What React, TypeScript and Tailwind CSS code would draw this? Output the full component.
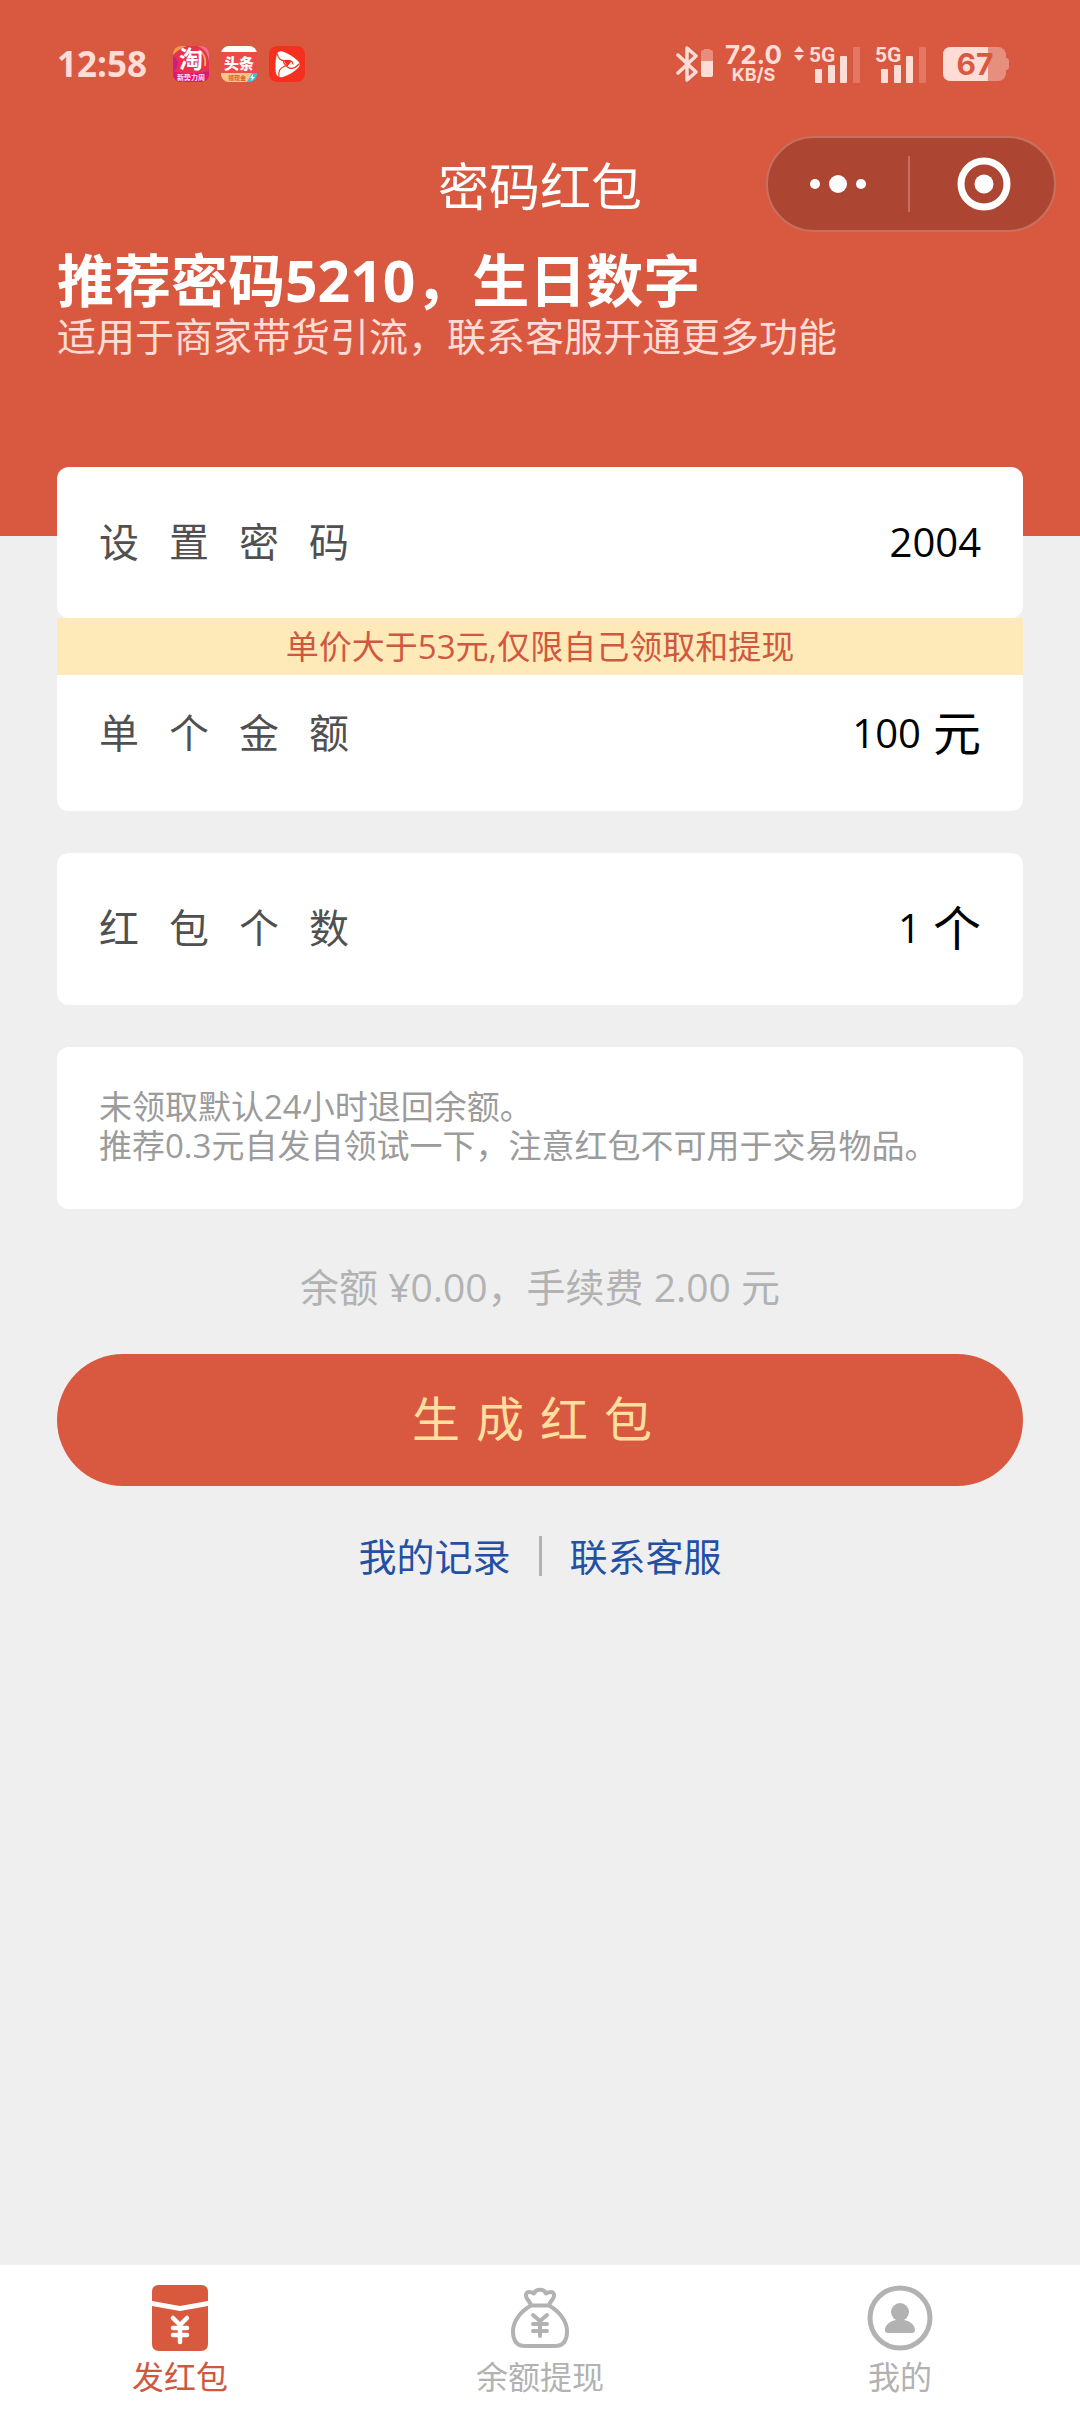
import React, { useState } from "react";

const FONT = "font-['Open_Sans','Noto_Sans_CJK_SC',sans-serif]";

function AppIconTao() {
  return (
    <svg className="size-9 overflow-visible" viewBox="0 0 36 36" role="img" aria-label="淘宝">
      <defs>
        <clipPath id="tao-clip">
          <rect width="36" height="36" rx="8" />
        </clipPath>
      </defs>
      <g clipPath="url(#tao-clip)">
        <rect width="36" height="36" fill="#e8304f" />
        <path d="M0 10 C8 14 4 24 0 26Z" fill="#c81e8c" />
        <path d="M24 0 C32 2 36 10 36 18 L36 0Z" fill="#f0708a" />
        <path d="M0 0 H14 C8 2 4 5 0 9Z" fill="#f09a4a" />
        <path d="M26 4 C32 8 33 14 32 20" stroke="#f5b04c" strokeWidth="2" fill="none" />
        <path d="M0 25 C6 28 28 28 36 25 V36 H0Z" fill="#e0147a" />
      </g>
      <text x="18" y="22" textAnchor="middle" fontSize="24" fontWeight="700" fill="#fff">淘</text>
      <text x="18" y="34" textAnchor="middle" fontSize="7" fontWeight="700" fill="#ffe3ef">新势力周</text>
    </svg>
  );
}

function AppIconNews() {
  return (
    <svg className="size-9 overflow-visible" viewBox="0 0 36 36" role="img" aria-label="头条">
      <defs>
        <clipPath id="news-clip">
          <rect width="36" height="36" rx="8" />
        </clipPath>
      </defs>
      <g clipPath="url(#news-clip)">
        <rect width="36" height="36" fill="#ee4a4a" />
        <rect width="36" height="6" fill="#fff" />
        <path d="M0 27 H31 L27 36 H0Z" fill="#fbc68a" />
        <path d="M31 27 H36 V36 H26Z" fill="#35c3d6" />
        <path d="M32 28 L29 32 H31 L30 35 L34 31 H32Z" fill="#fff" />
      </g>
      <text x="18" y="23" textAnchor="middle" fontSize="15" fontWeight="900" fill="#fff">头条</text>
      <text x="16" y="34" textAnchor="middle" fontSize="6" fontWeight="700" fill="#d4622f">领现金</text>
    </svg>
  );
}

function AppIconVideo() {
  return (
    <svg className="size-9" viewBox="0 0 36 36" role="img" aria-label="视频">
      <rect width="36" height="36" rx="8" fill="#f5301f" />
      <path
        d="M8 8 C9 5 12 4.500 15 6 C20 8 25 11 29 15 C31.500 17.500 31 20 29 22 C25 26 20 29 14 31 C10 32 7.500 30 7 27 C6 21 6.500 13 8 8Z"
        fill="#fff"
      />
      <g fill="none" stroke="#f5301f" strokeWidth="1.200" strokeLinecap="round">
        <path d="M8.500 8 C9 13 12 15 16 14.500 C20 14 23.500 14.500 24 18" />
        <path d="M30 18 C26 22.500 22 23.500 18.500 21 C15.500 18.500 14 17 14.500 14.500" />
        <path d="M10 30.500 C9 26 11 22 15 20.500 C19 19 21 17.500 21.500 15" />
      </g>
      <path d="M15 15 L22 15 L18.500 20.500Z" fill="#f5301f" />
    </svg>
  );
}

function Bluetooth() {
  return (
    <svg className="h-9 w-[37px]" viewBox="0 0 37 36" aria-label="蓝牙" role="img">
      <path
        d="M2 9 L20 26 L11 34 V2 L20 10 L2 27"
        fill="none"
        stroke="#ffdcd5"
        strokeWidth="3.500"
        strokeLinejoin="round"
        strokeLinecap="round"
      />
      <path d="M25 15 V6 Q25 4 27 4 H28 V3 H34 V4 H35 Q37 4 37 6 V15Z" fill="#e88d7b" />
      <path d="M25 15 H37 V29 Q37 31 35 31 H27 Q25 31 25 29Z" fill="#ffdcd5" />
    </svg>
  );
}

function Signal({ arrows = false }: { arrows?: boolean }) {
  return (
    <svg
      className={arrows ? "h-10 w-[67px]" : "h-10 w-[52px]"}
      viewBox={arrows ? "-15 0 67 40" : "0 0 52 40"}
      role="img"
      aria-label="5G 信号"
    >
      {arrows && <path d="M-15 8 L-10 2 L-5 8Z M-15 11 L-10 17 L-5 11Z" fill="#ffdcd5" />}
      <text x="0" y="18" fontSize="21" fontWeight="700" fill="#ffdcd5" fontFamily="Roboto">
        5G
      </text>
      <g fill="#ffdcd5">
        <rect x="6" y="25" width="7" height="14" rx="1" />
        <rect x="19" y="21" width="7" height="18" rx="1" />
        <rect x="31" y="12" width="7" height="27" rx="1" />
      </g>
      <rect x="44" y="3" width="7" height="36" rx="1" fill="#e37764" />
    </svg>
  );
}

function Battery() {
  return (
    <svg className="h-[34px] w-[66px]" viewBox="0 0 66 34" role="img" aria-label="电量 67%">
      <rect x="0" y="0" width="63" height="34" rx="8" fill="#e68f7f" />
      <path d="M62 11 H63 Q66 11 66 14 V20 Q66 23 63 23 H62Z" fill="#e68f7f" />
      <path d="M8 0 H45 V34 H8 Q0 34 0 26 V8 Q0 0 8 0Z" fill="#ffdcd5" />
      <text x="32" y="28" textAnchor="middle" fontSize="30" fontWeight="700" fill="#d95940" fontFamily="Inter">
        67
      </text>
    </svg>
  );
}

function Spaced({ text, className }: { text: string; className: string }) {
  return (
    <span className={`flex ${className}`}>
      {Array.from(text).map((char, i) => (
        <span key={i}>{char}</span>
      ))}
    </span>
  );
}

function Field({
  id,
  label,
  initial,
  unit,
  className,
}: {
  id: string;
  label: string;
  initial: string;
  unit?: string;
  className: string;
}) {
  const [value, setValue] = useState(initial);
  return (
    <div className={`flex items-center bg-white px-[42px] ${className}`}>
      <label htmlFor={id} className="shrink-0 text-[40px] leading-[56px] text-[#505050]">
        <Spaced text={label} className="gap-[30px]" />
      </label>
      <input
        id={id}
        value={value}
        onChange={(e) => setValue(e.target.value)}
        className="h-14 min-w-0 flex-1 bg-transparent text-right text-[40px] leading-[56px] text-black outline-none"
      />
      {unit && <span className="ml-3 text-[48px] leading-[56px] text-black">{unit}</span>}
    </div>
  );
}

function EnvelopeIcon() {
  return (
    <svg className="size-[66px]" viewBox="0 0 66 66" aria-hidden="true">
      <path d="M5 16 V7 Q5 0 12 0 H54 Q61 0 61 7 V16 L33 21Z" fill="#d9593f" />
      <path d="M5 21 L33 26 L61 21 V59 Q61 66 54 66 H12 Q5 66 5 59Z" fill="#d9593f" />
      <path
        d="M26 33 L33 40 L40 33 M33 40 V57 M26 43 H40 M26 50 H40"
        fill="none"
        stroke="#fff"
        strokeWidth="4.500"
        strokeLinecap="round"
        strokeLinejoin="round"
      />
    </svg>
  );
}

function MoneyBagIcon() {
  return (
    <svg className="size-[66px]" viewBox="0 0 66 66" aria-hidden="true">
      <g fill="none" stroke="#b2b2b2" strokeWidth="4" strokeLinejoin="round" strokeLinecap="round">
        <path d="M24 20 C22 15 18 13 19 9.500 C20 6 24 6.500 27 8.500 C29 3.500 37 3.500 39 8.500 C42 6.500 46 6 47 9.500 C48 13 44 15 42 20" />
        <path d="M24 20.500 H42 C52 26 60 36 60 46 C60 56 56 61 48 61 H18 C10 61 6 56 6 46 C6 36 14 26 24 20.500Z" />
        <path d="M26 30 L33 36 L40 30 M33 36 V51 M26 39 H40 M26 46 H40" />
      </g>
    </svg>
  );
}

function UserIcon() {
  return (
    <svg className="size-[66px]" viewBox="0 0 66 66" aria-hidden="true">
      <circle cx="33" cy="33" r="30" fill="none" stroke="#b2b2b2" strokeWidth="5" />
      <circle cx="33" cy="27" r="9" fill="#b2b2b2" />
      <path d="M29 33 H37 V35 C43 36 48 40 48 45 Q48 48 45 48 H21 Q18 48 18 45 C18 40 23 36 29 35Z" fill="#b2b2b2" />
    </svg>
  );
}

const TABS = [
  { label: "发红包", icon: EnvelopeIcon, active: true },
  { label: "余额提现", icon: MoneyBagIcon, active: false },
  { label: "我的", icon: UserIcon, active: false },
];

export default function App() {
  return (
    <div lang="zh-CN" className={`flex min-h-screen flex-col bg-[#efefef] ${FONT}`}>
      <header className="bg-[#d95940] pb-[176px] text-white">
        <div className="flex h-[136px] items-start justify-between pt-11 pr-[71px] pl-[57px]">
          <div className="flex h-10 items-center gap-3">
            <span className="mr-3.5 text-[35px] leading-10 font-bold text-[#ffdcd5]">12:58</span>
            <AppIconTao />
            <AppIconNews />
            <AppIconVideo />
          </div>
          <div className="flex h-10 items-center">
            <Bluetooth />
            <div className="mx-3 flex flex-col items-center font-['Inter'] font-bold text-[#ffdcd5]">
              <span className="text-[26px] leading-[22px]">72.0</span>
              <span className="text-[18px] leading-[18px]">KB/S</span>
            </div>
            <Signal arrows />
            <div className="mr-4 ml-3.5 h-10">
              <Signal />
            </div>
            <Battery />
          </div>
        </div>

        <div className="grid h-24 grid-cols-[1fr_auto_1fr] items-center">
          <h1 className="col-start-2 pt-1 text-[51px] leading-[60px]">密码红包</h1>
          <div className="mr-6 flex h-24 w-[290px] items-center justify-self-end rounded-full border-2 border-[#c8705e] bg-[#ac4633]">
            <button type="button" aria-label="更多" className="flex h-full flex-1 items-center justify-center">
              <svg className="h-5 w-14" viewBox="0 0 56 20" fill="#fff">
                <circle cx="5" cy="10" r="5" />
                <circle cx="28" cy="10" r="9" />
                <circle cx="51" cy="10" r="5" />
              </svg>
            </button>
            <span className="h-14 w-0.5 bg-[#c8705e]" />
            <button type="button" aria-label="关闭" className="flex h-full flex-1 items-center justify-center pl-1">
              <svg className="size-[54px]" viewBox="0 0 54 54">
                <circle cx="27" cy="27" r="23" fill="none" stroke="#fff" strokeWidth="7" />
                <circle cx="27" cy="27" r="9.500" fill="#fff" />
              </svg>
            </button>
          </div>
        </div>

        <div className="px-[57px] pt-4">
          <h2 className="text-[57px] leading-[64px] font-bold">推荐密码5210，生日数字</h2>
          <p className="text-[39px] leading-[48px] text-[#ffdcd5]">适用于商家带货引流，联系客服开通更多功能</p>
        </div>
      </header>

      <main className="-mt-[69px] flex flex-col px-[57px]">
        <Field id="password" label="设置密码" initial="2004" className="h-[151px] rounded-xl pb-0.5" />
        <p className="bg-[#fee9b8] text-center text-[33px] leading-[57px] text-[#d0583f]">
          单价大于53元,仅限自己领取和提现
        </p>
        <Field id="amount" label="单个金额" initial="100" unit="元" className="h-[136px] rounded-b-xl pb-5" />
        <Field id="count" label="红包个数" initial="1" unit="个" className="mt-[42px] h-[152px] rounded-xl pb-0.5" />
        <div className="mt-[42px] rounded-xl bg-white px-[42px] pt-10 pb-11 text-[33px] leading-[39px] text-[#9b9b9b]">
          <p>未领取默认24小时退回余额。</p>
          <p>推荐0.3元自发自领试一下，注意红包不可用于交易物品。</p>
        </div>
        <p className="mt-[54px] text-center text-[39px] leading-[48px] text-[#b2b2b2]">
          余额 ¥0.00，手续费 2.00 元
        </p>
        <button
          type="button"
          aria-label="生成红包"
          className="mt-[43px] flex h-[132px] items-center justify-center rounded-full bg-[#d95940] pr-4 pb-0.5 text-[48px] leading-[60px] text-[#ffdf9f]"
        >
          <Spaced text="生成红包" className="gap-4" />
        </button>
        <div className="mt-[46px] flex items-center justify-center gap-7 text-[38px] leading-[48px] text-[#2450a4]">
          <a href="#records">我的记录</a>
          <span className="h-10 w-[3px] bg-[#b2b2b2]" />
          <a href="#support">联系客服</a>
        </div>
      </main>

      <nav className="mt-auto grid h-[149px] grid-cols-3 bg-white pt-5">
        {TABS.map(({ label, icon: Icon, active }) => (
          <a
            key={label}
            href={`#${label}`}
            aria-current={active ? "page" : undefined}
            className={`flex flex-col items-center gap-1.5 text-[32px] leading-10 ${active ? "text-[#d0583f]" : "text-[#b2b2b2]"}`}
          >
            <Icon />
            {label}
          </a>
        ))}
      </nav>
    </div>
  );
}
